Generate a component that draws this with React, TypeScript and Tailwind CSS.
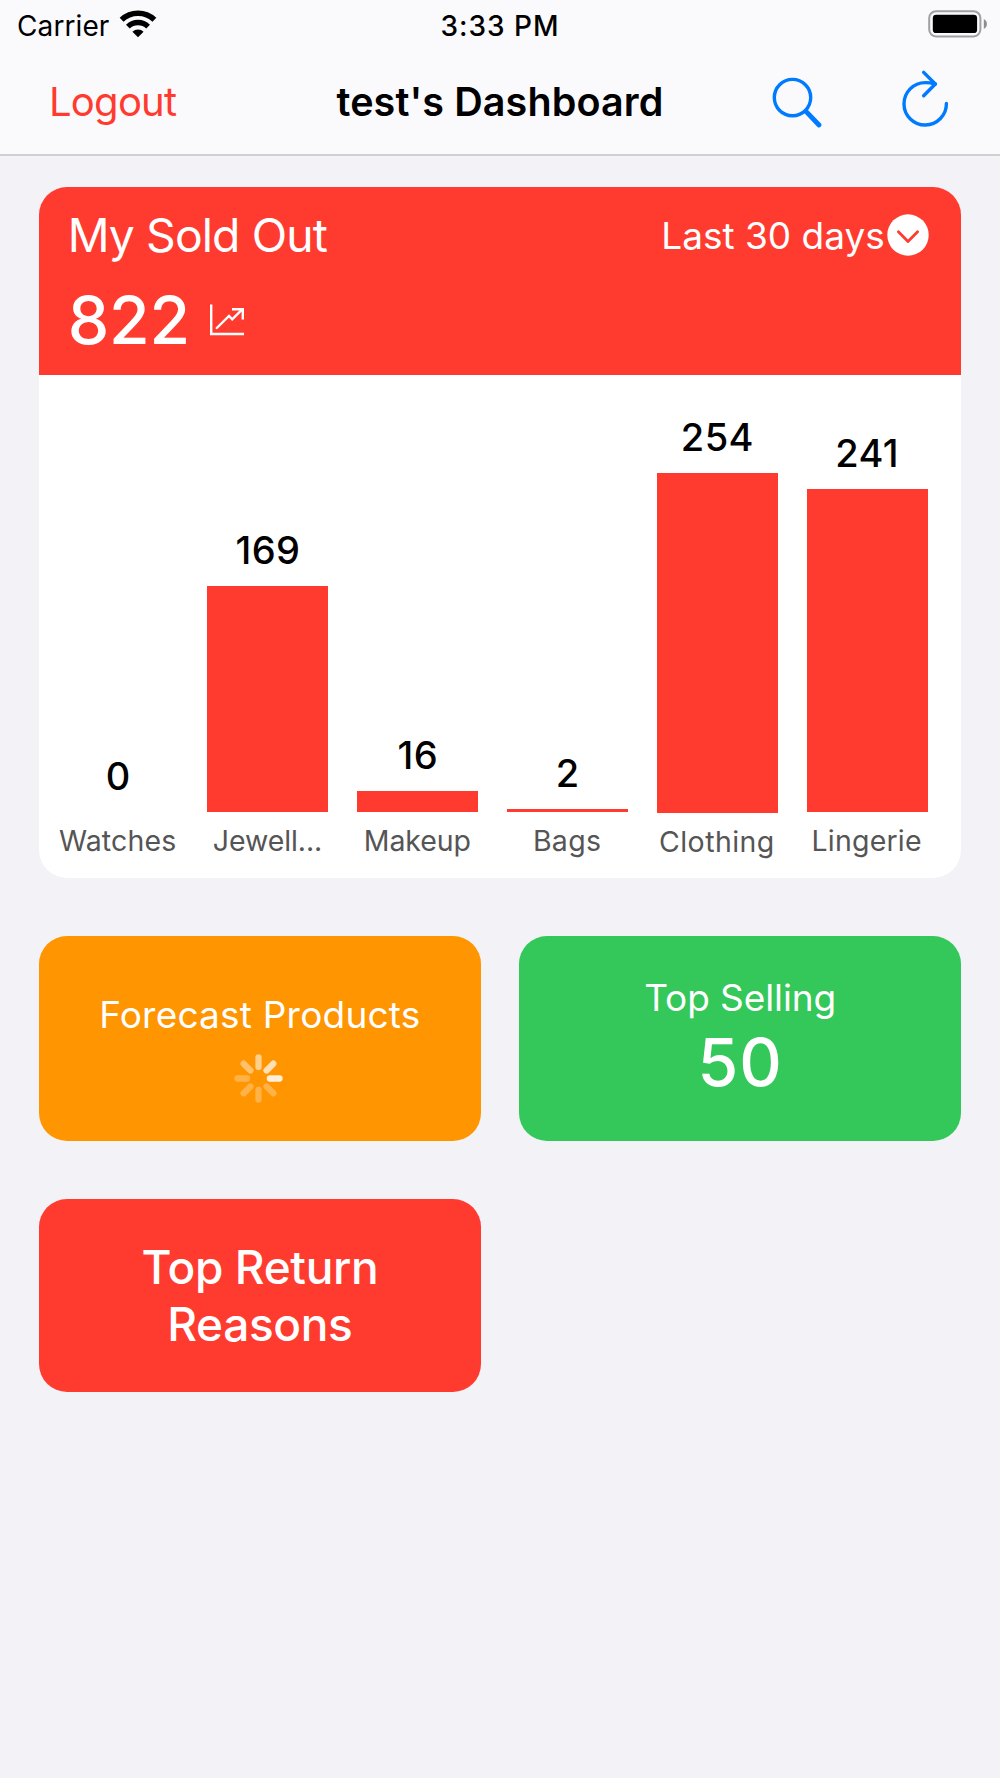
const SALES = [
  { name: 'Watches', total: 0, spacing: 'tracking-[0.15px]' },
  { name: 'Jewell...', total: 169, spacing: 'tracking-[-0.1px]' },
  { name: 'Makeup', total: 16, spacing: 'tracking-[-0.1px]' },
  { name: 'Bags', total: 2, spacing: 'tracking-[0.3px]' },
  { name: 'Clothing', total: 254, spacing: 'tracking-[0.45px]' },
  { name: 'Lingerie', total: 241, spacing: 'tracking-[0.2px]' },
]

const MAX_TOTAL = Math.max(...SALES.map((sale) => sale.total))
const MAX_BAR_HEIGHT = 340

const SPOKES = [0.55, 0.7, 0.85, 0.28, 0.28, 0.28, 0.28, 0.42]

const WifiIcon = () => (
  <svg width="38" height="30" viewBox="0 0 38 30" fill="none" stroke="black">
    <path d="M2.6 10.8A24 24 0 0 1 35.4 10.8" strokeWidth="5.6" />
    <path d="M8.9 17.6A14.6 14.6 0 0 1 29.1 17.6" strokeWidth="5.4" />
    <path d="M13.4 22.7A8.2 8.2 0 0 1 24.6 22.7L19 28.3Z" fill="black" stroke="none" />
  </svg>
)

const BatteryIcon = () => (
  <svg width="60" height="28" viewBox="0 0 60 28" fill="none">
    <rect x="1.2" y="1.2" width="51.2" height="25.2" rx="6.8" stroke="#a0a0a2" strokeWidth="2" />
    <rect x="4.8" y="4.7" width="44.3" height="18.4" rx="3.4" fill="black" />
    <path d="M55.8 9C60 11.2 60 16.8 55.8 19Z" fill="#8e8e90" />
  </svg>
)

const SearchIcon = () => (
  <svg width="50" height="51" viewBox="0 0 50 51" fill="none" stroke="#007aff" strokeLinecap="round">
    <circle cx="20.5" cy="20.6" r="18.2" strokeWidth="3.4" />
    <path d="M34.2 34.6L47 48" strokeWidth="4.8" />
  </svg>
)

const RefreshIcon = () => (
  <svg
    width="47"
    height="64"
    viewBox="0 0 47 64"
    fill="none"
    stroke="#007aff"
    strokeWidth="3.4"
    strokeLinecap="round"
    strokeLinejoin="round"
  >
    <path d="M44.4 33.4A21.2 21.2 0 1 1 23.2 12.6Q28.5 12.6 33.3 14" />
    <path d="M21.7 2.4L33.3 14L21.7 25.7" />
  </svg>
)

const TrendIcon = () => (
  <svg width="34" height="32" viewBox="0 0 34 32" fill="none" stroke="white" strokeWidth="2.4">
    <path d="M1.2 0.5V30H34" />
    <path d="M6.8 24L19 12L22.2 15.4L32.5 5.2" strokeLinecap="round" />
    <path d="M22 5.2H32.8V15.6" />
  </svg>
)

const Spinner = () => (
  <svg width="49" height="49" viewBox="-24.5 -24.5 49 49" stroke="white" strokeWidth="6.3" strokeLinecap="round">
    {SPOKES.map((opacity, index) => (
      <line key={index} y1="-11.4" y2="-21" opacity={opacity} transform={`rotate(${index * 45})`} />
    ))}
  </svg>
)

const StatusBar = () => (
  <div className="flex h-[51px] items-center pr-3 pl-[17px] text-[28px]">
    <div className="flex flex-1 items-center gap-[10px]">
      <span className="tracking-[0.1px]">Carrier</span>
      <span className="-mt-1">
        <WifiIcon />
      </span>
    </div>
    <span className="pr-[5px] font-medium tracking-[1px]">3:33 PM</span>
    <div className="flex flex-1 justify-end">
      <span className="-mt-[3px]">
        <BatteryIcon />
      </span>
    </div>
  </div>
)

const NavBar = () => (
  <div className="flex h-[103px] items-center pr-[51px] pl-[49px] text-[39.5px]">
    <button className="-mt-[2px] flex-1 text-left text-[40px] tracking-[-0.75px] text-[#ff3b30]">Logout</button>
    <h1 className="pl-[2px] font-semibold tracking-[0.12px]">test's Dashboard</h1>
    <div className="-mt-px flex flex-1 items-center justify-end gap-20">
      <SearchIcon />
      <RefreshIcon />
    </div>
  </div>
)

const SalesCard = () => (
  <section className="overflow-hidden rounded-[28px] bg-white">
    <div className="h-[188px] bg-[#ff3b30] pt-5 pr-8 pl-[29px] text-white">
      <div className="flex h-[57px] items-center justify-between">
        <h2 className="text-[46.3px] tracking-[-0.89px]">My Sold Out</h2>
        <button className="flex items-center gap-[2.5px] text-[37px]">
          Last 30 days
          <svg className="mb-[2px]" width="42" height="42" viewBox="0 0 42 42" fill="none">
            <circle cx="21" cy="21" r="20.7" fill="white" />
            <path
              d="M11.4 17.8L21 27.6L30.6 17.8"
              stroke="#ff3b30"
              strokeWidth="2.8"
              strokeLinecap="round"
              strokeLinejoin="round"
            />
          </svg>
        </button>
      </div>
      <div className="mt-4 flex h-20 items-center gap-5">
        <span className="text-[66px] font-medium tracking-[-0.25px]">822</span>
        <TrendIcon />
      </div>
    </div>

    <div className="flex h-[503px] items-end gap-[28.8px] pb-[21px] pl-[19px]">
      {SALES.map((sale) => (
        <div
          key={sale.name}
          className={`flex w-[121px] shrink-0 flex-col items-center ${sale.total === MAX_TOTAL ? '-mb-px' : ''}`}
        >
          <span className="mb-[13px] text-[38px] leading-[45px] font-medium tracking-[0.4px]">{sale.total}</span>
          <div
            className="w-full bg-[#ff3b30]"
            style={{ height: (sale.total / MAX_TOTAL) * MAX_BAR_HEIGHT }}
          />
          <span className={`mt-3 pr-px text-[28.5px] leading-[33px] text-[#555] ${sale.spacing}`}>
            {sale.name}
          </span>
        </div>
      ))}
    </div>
  </section>
)

export default function App() {
  return (
    <div className="min-h-screen bg-[#f2f2f7] font-['Inter',sans-serif] text-black">
      <header className="border-b-2 border-[#d0d0d4] bg-[#fafafd]">
        <StatusBar />
        <NavBar />
      </header>

      <main className="px-[38.7px] pt-[31px]">
        <SalesCard />

        <div className="mt-[58px] grid grid-cols-2 gap-x-[38px] gap-y-[58px] text-white">
          <div className="flex h-[205px] flex-col items-center rounded-[28px] bg-[#ff9500] pt-14">
            <h3 className="text-[37px] leading-[46px] tracking-[0.21px]">Forecast Products</h3>
            <div className="mt-[15.5px] pr-[3px]">
              <Spinner />
            </div>
          </div>
          <div className="flex h-[205px] flex-col items-center rounded-[28px] bg-[#34c759] pt-[39px]">
            <h3 className="text-[37px] leading-[46px] tracking-[-0.1px]">Top Selling</h3>
            <span className="mt-px text-[66px] leading-[80px] font-medium tracking-[1px]">50</span>
          </div>
          <div className="flex h-[193px] items-center justify-center rounded-[28px] bg-[#ff3b30] px-20">
            <h3 className="text-center text-[46px] leading-[57px] font-medium tracking-[-0.36px]">
              Top Return Reasons
            </h3>
          </div>
        </div>
      </main>
    </div>
  )
}
